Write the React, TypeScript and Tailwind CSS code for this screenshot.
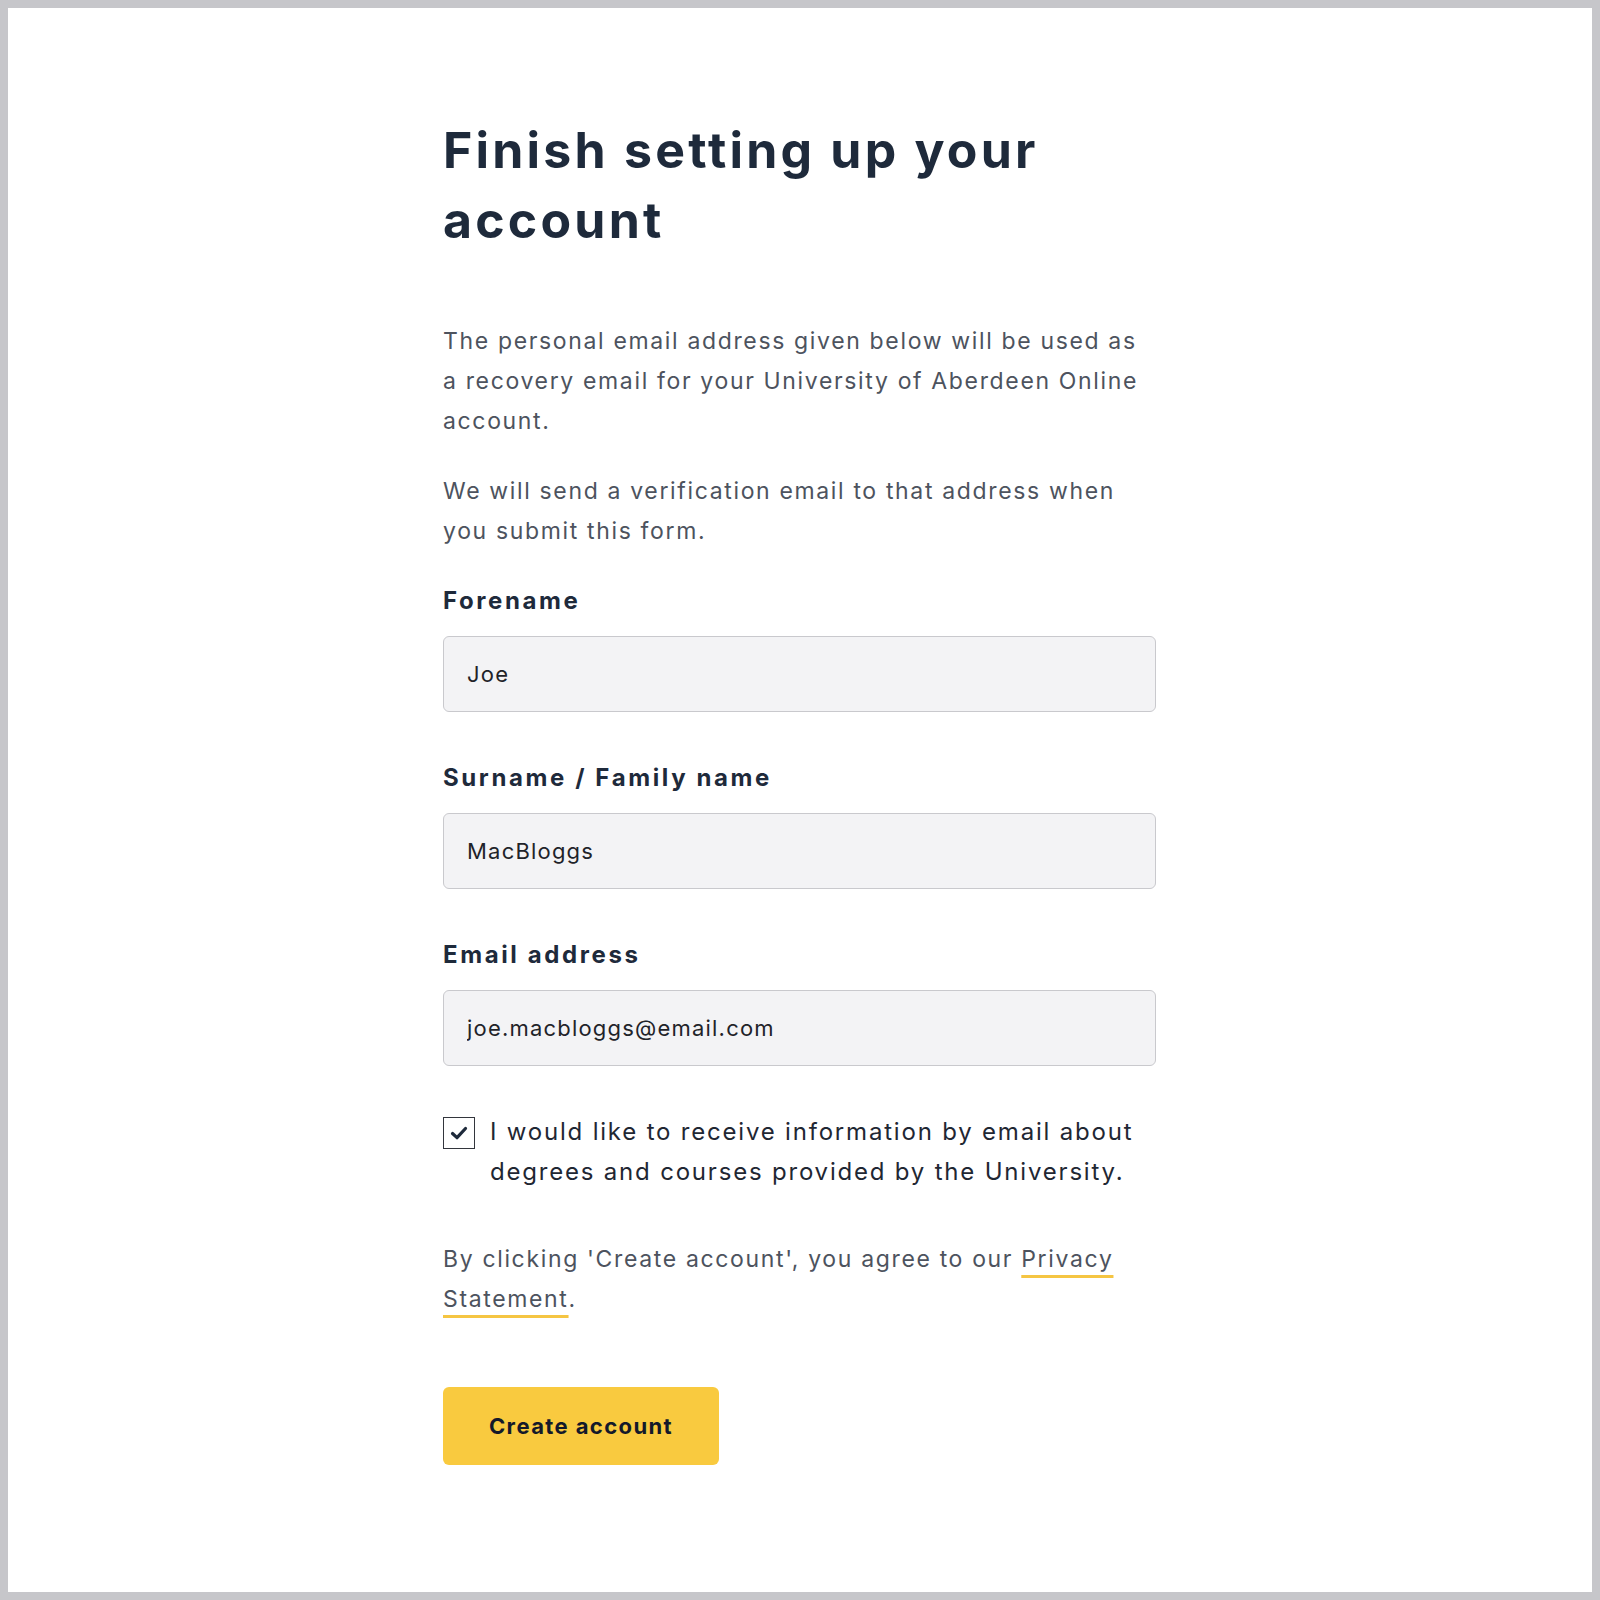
import React from 'react'

const fields = [
  { label: 'Forename', value: 'Joe' },
  { label: 'Surname / Family name', value: 'MacBloggs' },
  { label: 'Email address', value: 'joe.macbloggs@email.com' },
]

export default function App() {
  return (
    <div className="w-[1600px] h-[1600px] border-[8px] border-[#c6c6ca] bg-white font-['Inter',sans-serif]">
      <div className="w-[713px] ml-[435px] pt-[107px]">
        {/* Heading */}
        <h1 className="text-[50px] leading-[70px] font-bold tracking-[3.2px] text-[#1e2a3b]">
          Finish setting up your account
        </h1>

        {/* Intro copy */}
        <p className="mt-[66px] text-[23px] leading-[40px] tracking-[1.65px] text-[#4d535e]">
          The personal email address given below will be used as a recovery email for your University of Aberdeen Online account.
        </p>
        <p className="mt-[30px] text-[23px] leading-[40px] tracking-[1.65px] text-[#4d535e]">
          We will send a verification email to that address when you submit this form.
        </p>

        {/* Fields */}
        <div className="mt-[34px] flex flex-col gap-[50px]">
          {fields.map((f) => (
            <div key={f.label} className="flex flex-col gap-[19px]">
              <label className="text-[24px] leading-[32px] font-bold tracking-[2.6px] text-[#1e2a3b]">{f.label}</label>
              <input
                readOnly
                value={f.value}
                className="h-[76px] w-full rounded-[6px] border border-[#c9c9cd] bg-[#f3f3f5] px-[23px] text-[22px] tracking-[1.2px] text-[#1f2329] outline-none font-['Inter',sans-serif]"
              />
            </div>
          ))}
        </div>

        {/* Marketing opt-in */}
        <div className="mt-[46px] flex items-start gap-[15px]">
          <span className="mt-[5px] flex h-[32px] w-[32px] shrink-0 items-center justify-center border-[1.5px] border-[#33363d] bg-white">
            <svg width="18" height="14" viewBox="0 0 18 14" fill="none">
              <path d="M2.5 7.5l4.5 4.2 8.5-9.2" stroke="#1e2a3b" strokeWidth="3.2" strokeLinecap="round" strokeLinejoin="round" />
            </svg>
          </span>
          <p className="text-[24px] leading-[40px] tracking-[1.8px] text-[#1f2733]">
            I would like to receive information by email about degrees and courses provided by the University.
          </p>
        </div>

        {/* Privacy */}
        <p className="mt-[47px] text-[23px] leading-[40px] tracking-[1.65px] text-[#4d535e]">
          By clicking 'Create account', you agree to our{' '}
          <a href="#" className="underline decoration-[#f5c542] decoration-[2.5px] underline-offset-[8px]">
            Privacy Statement
          </a>
          .
        </p>

        <button className="mt-[68px] h-[78px] w-[276px] rounded-[6px] bg-[#f9ca3f] text-[22px] font-bold tracking-[1.4px] text-[#14192a]">
          Create account
        </button>
      </div>
    </div>
  )
}
